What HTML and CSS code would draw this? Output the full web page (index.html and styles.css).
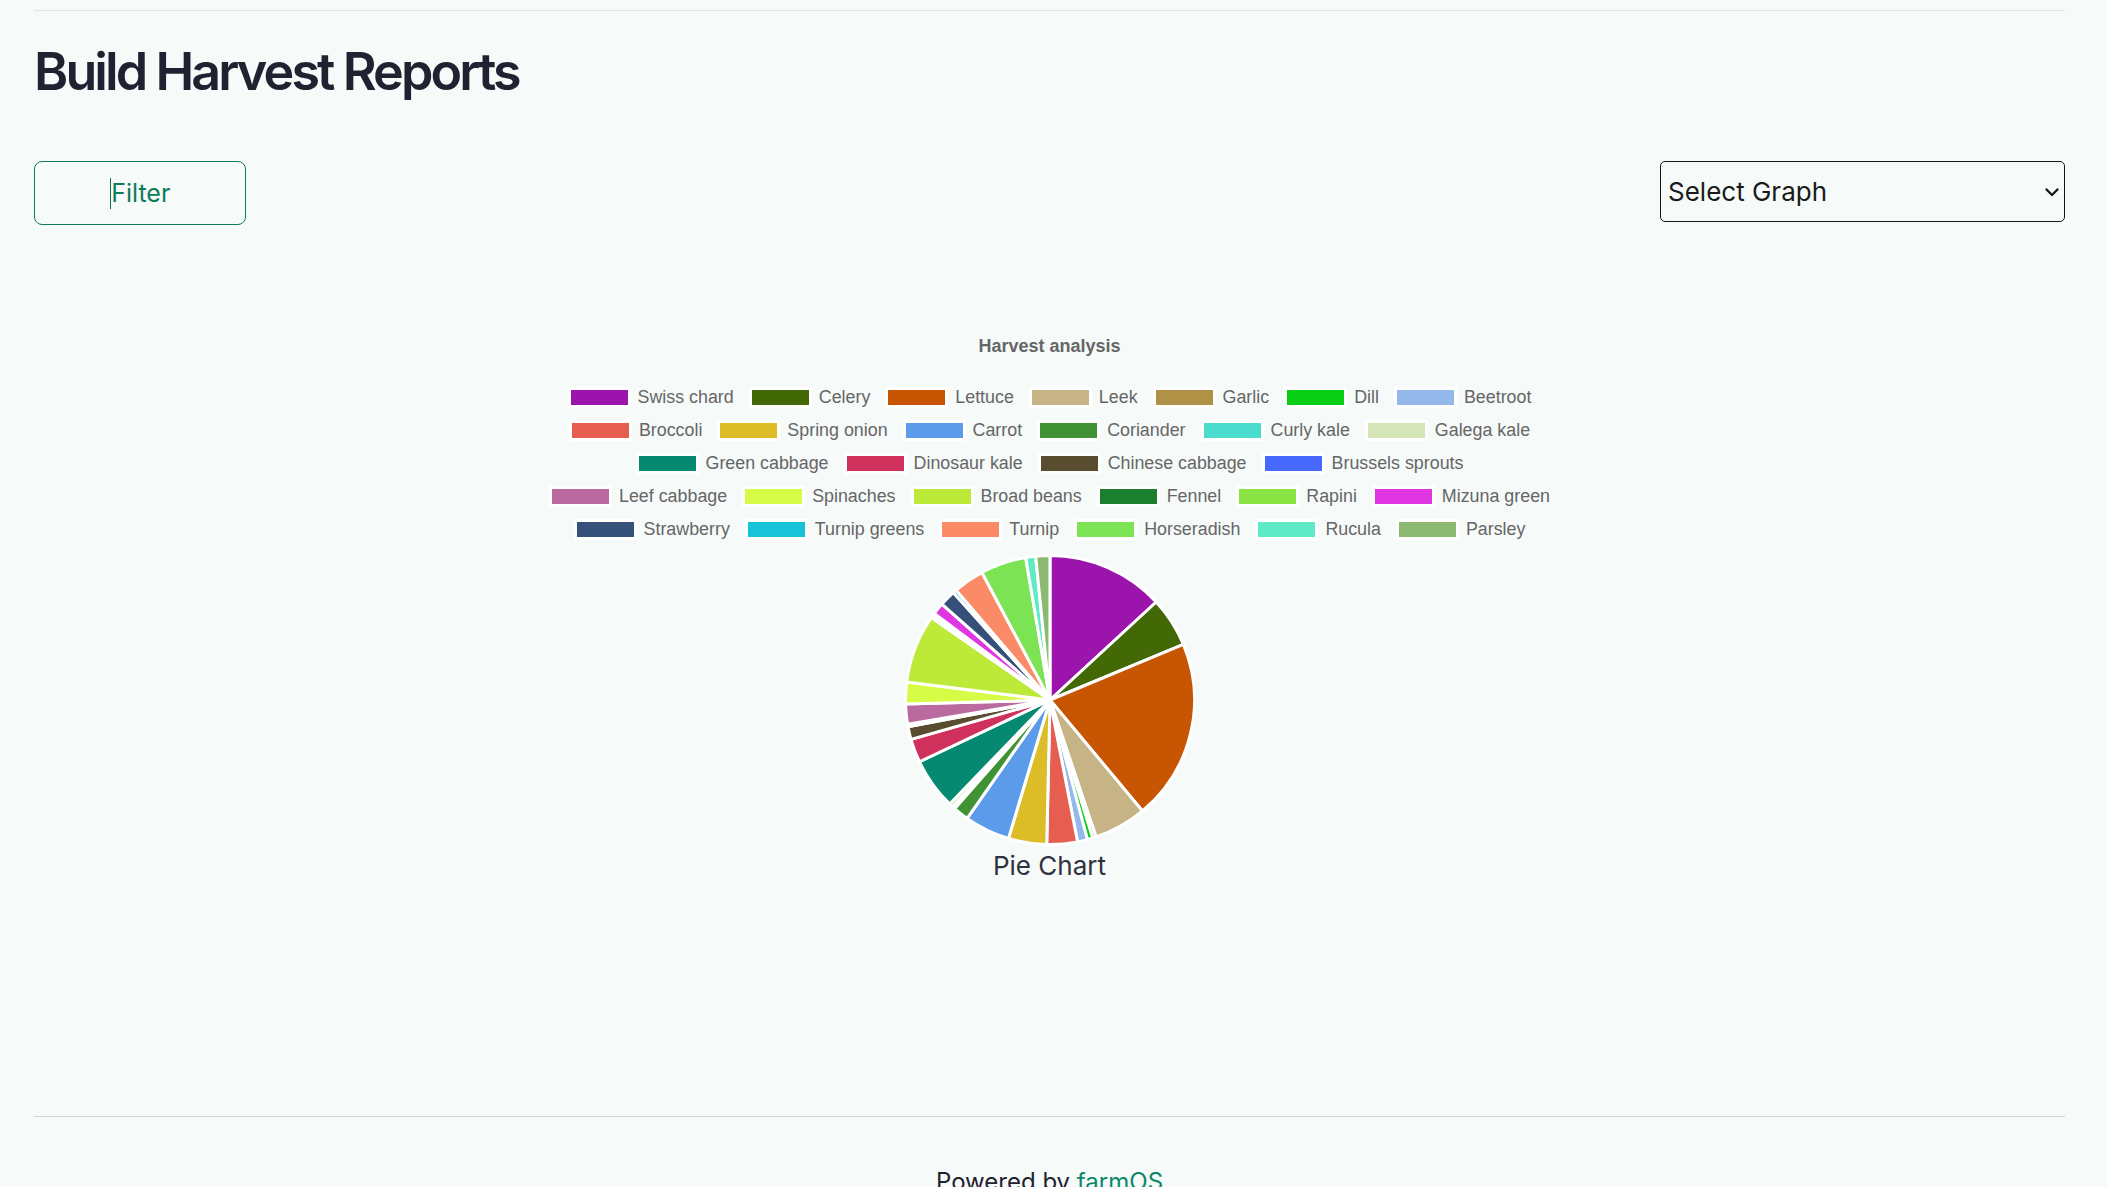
FILE: index.html
```html
<!DOCTYPE html>
<html lang="en">
<head>
<meta charset="utf-8">
<title>Build Harvest Reports</title>
<link rel="stylesheet" href="styles.css">
</head>
<body>
<div class="page">
  <hr class="rule rule-top">
  <h1 class="title">Build Harvest Reports</h1>
  <div class="controls">
    <button class="filter-btn" type="button"><span class="caret"></span>Filter</button>
    <div class="select-wrap">
      <select class="graph-select">
        <option>Select Graph</option>
        <option>Pie Chart</option>
        <option>Bar Chart</option>
      </select>
      <svg class="chevron" width="14" height="9" viewBox="0 0 14 9" aria-hidden="true"><path d="M1.5 1.5 L7 7 L12.5 1.5" fill="none" stroke="#111" stroke-width="2.2" stroke-linecap="round" stroke-linejoin="round"/></svg>
    </div>
  </div>

  <section class="chart">
    <div class="chart-title">Harvest analysis</div>
    <div class="legend" id="legend">
      <div class="legend-row">
        <span class="item"><i class="box c-swiss"></i><span class="lbl">Swiss chard</span></span>
        <span class="item"><i class="box c-celery"></i><span class="lbl">Celery</span></span>
        <span class="item"><i class="box c-lettuce"></i><span class="lbl">Lettuce</span></span>
        <span class="item"><i class="box c-leek"></i><span class="lbl">Leek</span></span>
        <span class="item"><i class="box c-garlic"></i><span class="lbl">Garlic</span></span>
        <span class="item"><i class="box c-dill"></i><span class="lbl">Dill</span></span>
        <span class="item"><i class="box c-beetroot"></i><span class="lbl">Beetroot</span></span>
      </div>
      <div class="legend-row">
        <span class="item"><i class="box c-broccoli"></i><span class="lbl">Broccoli</span></span>
        <span class="item"><i class="box c-spring"></i><span class="lbl">Spring onion</span></span>
        <span class="item"><i class="box c-carrot"></i><span class="lbl">Carrot</span></span>
        <span class="item"><i class="box c-coriander"></i><span class="lbl">Coriander</span></span>
        <span class="item"><i class="box c-curly"></i><span class="lbl">Curly kale</span></span>
        <span class="item"><i class="box c-galega"></i><span class="lbl">Galega kale</span></span>
      </div>
      <div class="legend-row">
        <span class="item"><i class="box c-greencab"></i><span class="lbl">Green cabbage</span></span>
        <span class="item"><i class="box c-dino"></i><span class="lbl">Dinosaur kale</span></span>
        <span class="item"><i class="box c-chinese"></i><span class="lbl">Chinese cabbage</span></span>
        <span class="item"><i class="box c-brussels"></i><span class="lbl">Brussels sprouts</span></span>
      </div>
      <div class="legend-row">
        <span class="item"><i class="box c-leef"></i><span class="lbl">Leef cabbage</span></span>
        <span class="item"><i class="box c-spinach"></i><span class="lbl">Spinaches</span></span>
        <span class="item"><i class="box c-broad"></i><span class="lbl">Broad beans</span></span>
        <span class="item"><i class="box c-fennel"></i><span class="lbl">Fennel</span></span>
        <span class="item"><i class="box c-rapini"></i><span class="lbl">Rapini</span></span>
        <span class="item"><i class="box c-mizuna"></i><span class="lbl">Mizuna green</span></span>
      </div>
      <div class="legend-row">
        <span class="item"><i class="box c-straw"></i><span class="lbl">Strawberry</span></span>
        <span class="item"><i class="box c-turnipg"></i><span class="lbl">Turnip greens</span></span>
        <span class="item"><i class="box c-turnip"></i><span class="lbl">Turnip</span></span>
        <span class="item"><i class="box c-horse"></i><span class="lbl">Horseradish</span></span>
        <span class="item"><i class="box c-rucula"></i><span class="lbl">Rucula</span></span>
        <span class="item"><i class="box c-parsley"></i><span class="lbl">Parsley</span></span>
      </div>
    </div>
    <svg class="pie" id="pie" width="300" height="300" viewBox="0 0 300 300" role="img" aria-label="Harvest pie chart"></svg>
    <div class="chart-caption">Pie Chart</div>
  </section>

  <footer class="footer">
    <hr class="rule rule-bottom">
    <p class="powered">Powered by <a href="#" class="brand">farmOS</a></p>
  </footer>
</div>
<script src="script.js"></script>
</body>
</html>
```

FILE: styles.css
```css
* { box-sizing: border-box; }
html, body { margin: 0; padding: 0; }
body {
  background: #f6faf9;
  font-family: Inter, "Noto Sans", sans-serif;
  color: #1f2230;
  overflow: hidden;
}
.page {
  padding: 10px 42px 0 34px;
}
.rule {
  border: 0;
  margin: 0;
  height: 1px;
}
.rule-top { background: #e1e5e5; }
.rule-bottom { background: #d5d6da; }

.title {
  margin: 29px 0 0 0;
  font-size: 52px;
  line-height: 64px;
  font-weight: 600;
  letter-spacing: -2.9px;
  color: #1f2230;
}

.controls {
  margin-top: 57px;
  display: flex;
  justify-content: space-between;
  align-items: flex-start;
}
.filter-btn {
  width: 212px;
  height: 64px;
  border: 1px solid #0e7b5b;
  border-radius: 8px;
  background: transparent;
  color: #0e7b5b;
  font-family: Inter, sans-serif;
  font-size: 25px;
  display: flex;
  align-items: center;
  justify-content: center;
  padding: 0;
}
.caret {
  display: inline-block;
  width: 1.5px;
  height: 31px;
  background: #136b4f;
}
.select-wrap {
  position: relative;
  width: 405px;
  height: 61px;
}
.graph-select {
  appearance: none;
  -webkit-appearance: none;
  width: 100%;
  height: 100%;
  border: 1px solid #161616;
  border-radius: 5px;
  background: transparent;
  font-family: Inter, sans-serif;
  font-size: 26px;
  color: #1a1a1a;
  padding: 0 0 0 7px;
}
.chevron {
  position: absolute;
  right: 6px;
  top: 27px;
  pointer-events: none;
}

.chart {
  margin-top: 111px;
  display: flex;
  flex-direction: column;
  align-items: center;
}
.chart-title {
  font-family: "Liberation Sans", Arial, sans-serif;
  font-weight: 700;
  font-size: 18px;
  line-height: 20px;
  color: #666;
}
.legend {
  margin-top: 25px;
  display: flex;
  flex-direction: column;
  align-items: center;
}
.legend-row {
  height: 33px;
  display: flex;
  align-items: center;
  justify-content: center;
  gap: 15px;
}
.item {
  display: flex;
  align-items: center;
}
.box {
  display: block;
  width: 63px;
  height: 21px;
  border: 3px solid #fff;
}
.lbl {
  margin-left: 7px;
  font-family: "Liberation Sans", Arial, sans-serif;
  font-size: 17.85px;
  line-height: 33px;
  color: #666;
  white-space: nowrap;
}
.pie {
  display: block;
  margin-top: 4px;
}
.chart-caption {
  margin-top: 1px;
  font-size: 26px;
  line-height: 30px;
  color: #2e3140;
}

.footer {
  margin-top: 235px;
}
.powered {
  margin: 50px 0 0 0;
  text-align: center;
  font-size: 24px;
  line-height: 30px;
  color: #1f2230;
}
.brand {
  color: #0b8768;
  text-decoration: none;
}

.c-swiss { background: #9b14ab; }
.c-celery { background: #436806; }
.c-lettuce { background: #c75502; }
.c-leek { background: #c6b386; }
.c-garlic { background: #b09247; }
.c-dill { background: #0bce16; }
.c-beetroot { background: #95b8ea; }
.c-broccoli { background: #e55e50; }
.c-spring { background: #dcbd28; }
.c-carrot { background: #5b9be9; }
.c-coriander { background: #409234; }
.c-curly { background: #4adccc; }
.c-galega { background: #d6e5b8; }
.c-greencab { background: #058a71; }
.c-dino { background: #cf305c; }
.c-chinese { background: #584d2e; }
.c-brussels { background: #4668fd; }
.c-leef { background: #bb6aa0; }
.c-spinach { background: #d7fc48; }
.c-broad { background: #bde938; }
.c-fennel { background: #1a8030; }
.c-rapini { background: #8ce444; }
.c-mizuna { background: #e036e2; }
.c-straw { background: #355179; }
.c-turnipg { background: #17c4d7; }
.c-turnip { background: #fb8b66; }
.c-horse { background: #7ce354; }
.c-rucula { background: #5deac4; }
.c-parsley { background: #8bb972; }
```

FILE: script.js
```js
(function () {
  // cumulative end angle (degrees clockwise from 12 o'clock) and colour for each slice
  var slices = [
    [47.3, '#9b14ab'], [67.4, '#436806'], [140.2, '#c75502'], [161.4, '#c6b386'],
    [162.8, '#b09247'], [165.0, '#0bce16'], [169.0, '#95b8ea'], [181.3, '#e55e50'],
    [196.7, '#dcbd28'], [215.0, '#5b9be9'], [221.3, '#409234'], [222.3, '#4adccc'],
    [224.0, '#d6e5b8'], [244.7, '#058a71'], [254.2, '#cf305c'], [259.3, '#584d2e'],
    [260.3, '#4668fd'], [268.4, '#bb6aa0'], [277.2, '#d7fc48'], [304.8, '#bde938'],
    [305.8, '#1a8030'], [306.8, '#8ce444'], [311.6, '#e036e2'], [318.0, '#355179'],
    [319.5, '#17c4d7'], [331.9, '#fb8b66'], [350.3, '#7ce354'], [354.3, '#5deac4'],
    [360.0, '#8bb972']
  ];
  var svg = document.getElementById('pie');
  var ns = 'http://www.w3.org/2000/svg';
  var cx = 150, cy = 150, r = 144.5;
  function pt(deg) {
    var a = (deg - 90) * Math.PI / 180;
    return [cx + r * Math.cos(a), cy + r * Math.sin(a)];
  }
  var start = 0;
  slices.forEach(function (s) {
    var end = s[0];
    var p1 = pt(start), p2 = pt(end);
    var large = (end - start) > 180 ? 1 : 0;
    var d = 'M' + cx + ' ' + cy + ' L' + p1[0].toFixed(2) + ' ' + p1[1].toFixed(2) +
      ' A' + r + ' ' + r + ' 0 ' + large + ' 1 ' + p2[0].toFixed(2) + ' ' + p2[1].toFixed(2) + ' Z';
    var path = document.createElementNS(ns, 'path');
    path.setAttribute('d', d);
    path.setAttribute('fill', s[1]);
    path.setAttribute('stroke', '#fff');
    path.setAttribute('stroke-width', '3');
    path.setAttribute('stroke-linejoin', 'miter');
    svg.appendChild(path);
    start = end;
  });
})();
```
